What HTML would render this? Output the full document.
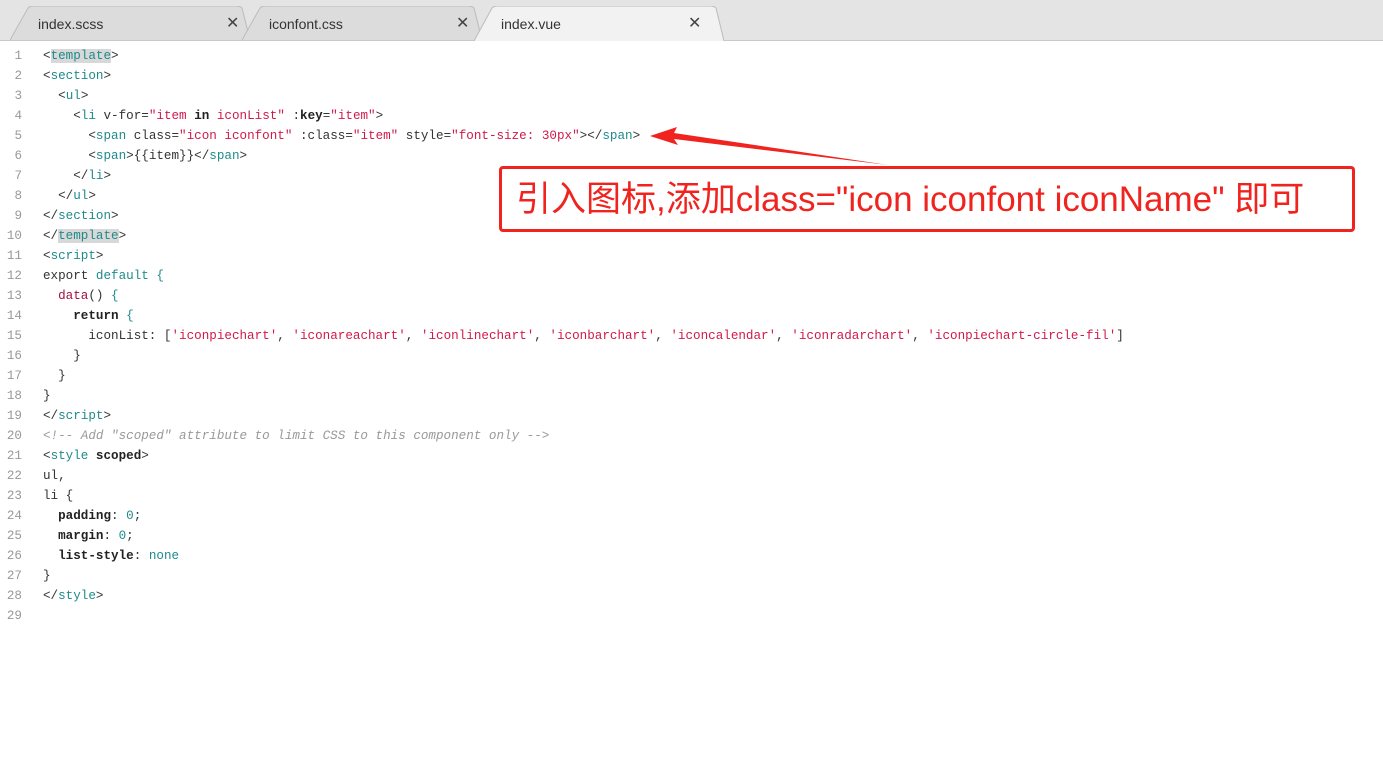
<!DOCTYPE html>
<html><head><meta charset="utf-8"><style>
body{margin:0;width:1383px;height:767px;background:#fff;overflow:hidden;position:relative;font-family:"Liberation Sans",sans-serif}
.tabbar{position:absolute;left:0;top:0;width:1383px;height:40px;background:#e4e4e4;border-bottom:1px solid #c8c8c8}
.tab{position:absolute;top:6px;height:34px;font-size:14px;color:#333;line-height:36px}
.tab svg{position:absolute;left:0;top:0}
.tab span{position:absolute;top:0}
.tab b{position:absolute;top:0;font-weight:normal;font-size:16px;color:#444}
.code{position:absolute;left:0;top:46px;font-family:"Liberation Mono",monospace;font-size:12.6px;line-height:20px;white-space:pre;color:#333}
.ln{position:absolute;left:0;width:22px;text-align:right;color:#999}
.l{position:absolute;left:43px}
.t{color:#1f8a8a}.s{color:#d0194a}.k{font-weight:bold;color:#222}.c{color:#999;font-style:italic}.f{color:#a01040}.h{background:#d8d8d8}
.box{position:absolute;left:499px;top:166px;width:836px;height:60px;border:3px solid #f0231f;border-radius:4px;color:#f0231f;font-size:35px;line-height:62px;padding-left:14px;box-sizing:content-box;font-family:"Liberation Sans","Noto Sans CJK SC",sans-serif;white-space:nowrap}
</style></head><body>
<div class="tabbar">
 <div class="tab" style="left:10px;width:240px"><svg width="240" height="34"><path d="M0 34 L18 2 Q20 0 24 0 L226 0 Q230 0 232 2 L240 34" fill="#dcdcdc" stroke="#bbb"/></svg><span style="left:28px">index.scss</span><b style="left:216px">✕</b></div>
 <div class="tab" style="left:242px;width:240px"><svg width="240" height="34"><path d="M0 34 L18 2 Q20 0 24 0 L226 0 Q230 0 232 2 L240 34" fill="#dcdcdc" stroke="#bbb"/></svg><span style="left:27px">iconfont.css</span><b style="left:214px">✕</b></div>
 <div class="tab" style="left:474px;width:250px"><svg width="250" height="35"><path d="M0 35 L18 2 Q20 0 24 0 L236 0 Q240 0 242 2 L250 35" fill="#f2f2f2" stroke="#bbb"/></svg><span style="left:27px">index.vue</span><b style="left:214px">✕</b></div>
</div>
<div class="code">
<div class="ln" style="top:0">1</div><div class="l" style="top:0">&lt;<span class="t h">template</span>&gt;</div>
<div class="ln" style="top:20px">2</div><div class="l" style="top:20px">&lt;<span class="t">section</span>&gt;</div>
<div class="ln" style="top:40px">3</div><div class="l" style="top:40px">  &lt;<span class="t">ul</span>&gt;</div>
<div class="ln" style="top:60px">4</div><div class="l" style="top:60px">    &lt;<span class="t">li</span> v-for=<span class="s">"item <span class="k">in</span> iconList"</span> :<span class="k">key</span>=<span class="s">"item"</span>&gt;</div>
<div class="ln" style="top:80px">5</div><div class="l" style="top:80px">      &lt;<span class="t">span</span> class=<span class="s">"icon iconfont"</span> :class=<span class="s">"item"</span> style=<span class="s">"font-size: 30px"</span>&gt;&lt;/<span class="t">span</span>&gt;</div>
<div class="ln" style="top:100px">6</div><div class="l" style="top:100px">      &lt;<span class="t">span</span>&gt;{{item}}&lt;/<span class="t">span</span>&gt;</div>
<div class="ln" style="top:120px">7</div><div class="l" style="top:120px">    &lt;/<span class="t">li</span>&gt;</div>
<div class="ln" style="top:140px">8</div><div class="l" style="top:140px">  &lt;/<span class="t">ul</span>&gt;</div>
<div class="ln" style="top:160px">9</div><div class="l" style="top:160px">&lt;/<span class="t">section</span>&gt;</div>
<div class="ln" style="top:180px">10</div><div class="l" style="top:180px">&lt;/<span class="t h">template</span>&gt;</div>
<div class="ln" style="top:200px">11</div><div class="l" style="top:200px">&lt;<span class="t">script</span>&gt;</div>
<div class="ln" style="top:220px">12</div><div class="l" style="top:220px">export <span class="t">default</span> <span class="t">{</span></div>
<div class="ln" style="top:240px">13</div><div class="l" style="top:240px">  <span class="f">data</span>() <span class="t">{</span></div>
<div class="ln" style="top:260px">14</div><div class="l" style="top:260px">    <span class="k">return</span> <span class="t">{</span></div>
<div class="ln" style="top:280px">15</div><div class="l" style="top:280px">      iconList: [<span class="s">'iconpiechart'</span>, <span class="s">'iconareachart'</span>, <span class="s">'iconlinechart'</span>, <span class="s">'iconbarchart'</span>, <span class="s">'iconcalendar'</span>, <span class="s">'iconradarchart'</span>, <span class="s">'iconpiechart-circle-fil'</span>]</div>
<div class="ln" style="top:300px">16</div><div class="l" style="top:300px">    }</div>
<div class="ln" style="top:320px">17</div><div class="l" style="top:320px">  }</div>
<div class="ln" style="top:340px">18</div><div class="l" style="top:340px">}</div>
<div class="ln" style="top:360px">19</div><div class="l" style="top:360px">&lt;/<span class="t">script</span>&gt;</div>
<div class="ln" style="top:380px">20</div><div class="l c" style="top:380px">&lt;!-- Add "scoped" attribute to limit CSS to this component only --&gt;</div>
<div class="ln" style="top:400px">21</div><div class="l" style="top:400px">&lt;<span class="t">style</span> <span class="k">scoped</span>&gt;</div>
<div class="ln" style="top:420px">22</div><div class="l" style="top:420px">ul,</div>
<div class="ln" style="top:440px">23</div><div class="l" style="top:440px">li {</div>
<div class="ln" style="top:460px">24</div><div class="l" style="top:460px">  <span class="k">padding</span>: <span class="t">0</span>;</div>
<div class="ln" style="top:480px">25</div><div class="l" style="top:480px">  <span class="k">margin</span>: <span class="t">0</span>;</div>
<div class="ln" style="top:500px">26</div><div class="l" style="top:500px">  <span class="k">list-style</span>: <span class="t">none</span></div>
<div class="ln" style="top:520px">27</div><div class="l" style="top:520px">}</div>
<div class="ln" style="top:540px">28</div><div class="l" style="top:540px">&lt;/<span class="t">style</span>&gt;</div>
<div class="ln" style="top:560px">29</div>
</div>
<svg style="position:absolute;left:0;top:0" width="1383" height="767"><path d="M888 165 L674 139 L678 145 L650 136 L677 127 L674 133 Z" fill="#f0231f"/></svg>
<div class="box">引入图标,添加class="icon iconfont iconName" 即可</div>
</body></html>
